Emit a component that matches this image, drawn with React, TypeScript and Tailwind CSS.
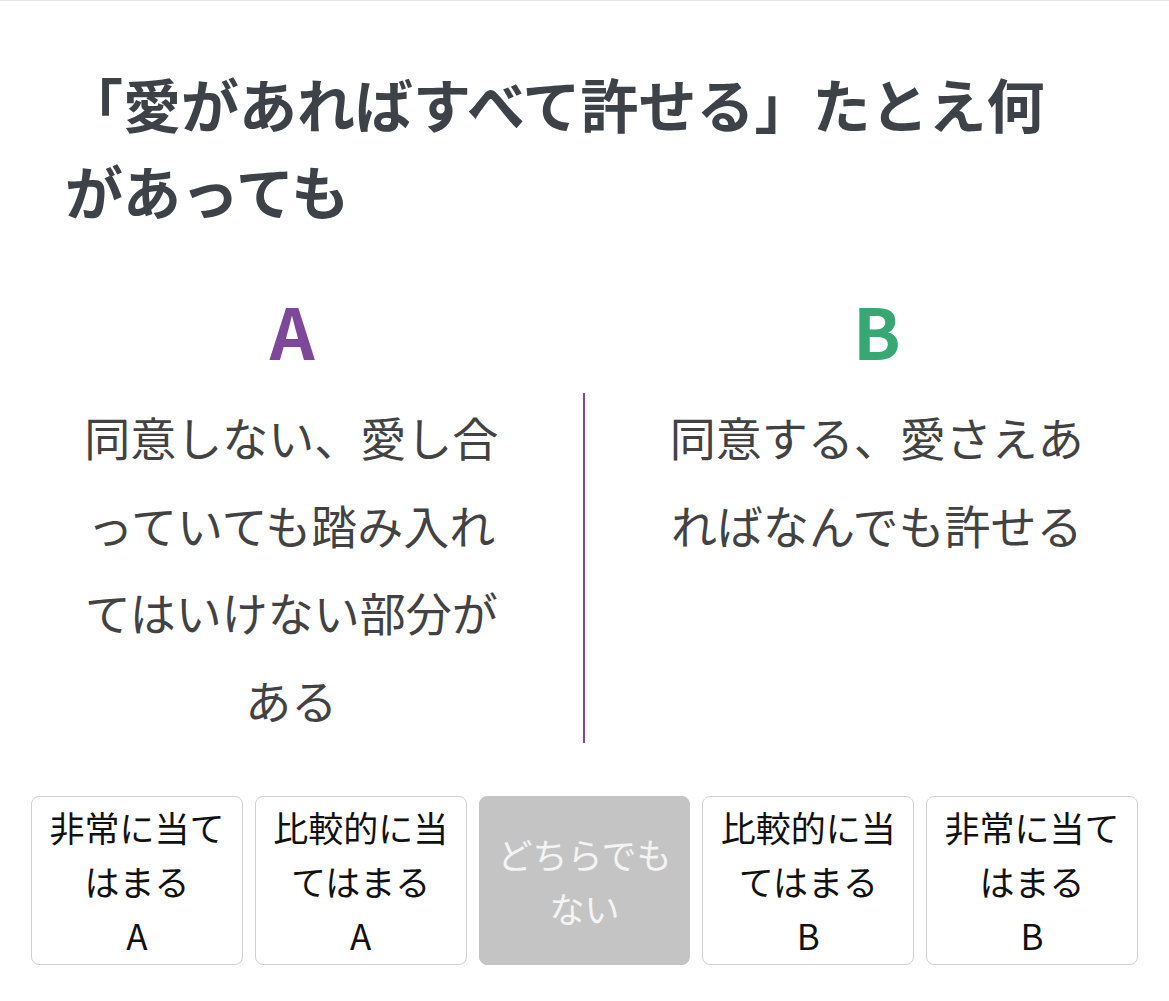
import React from 'react'

type Choice = { label: string; side?: 'A' | 'B'; neutral?: boolean }

const choices: Choice[] = [
  { label: '非常に当てはまる', side: 'A' },
  { label: '比較的に当てはまる', side: 'A' },
  { label: 'どちらでもない', neutral: true },
  { label: '比較的に当てはまる', side: 'B' },
  { label: '非常に当てはまる', side: 'B' },
]

function ChoiceButton({ choice }: { choice: Choice }) {
  if (choice.neutral) {
    return (
      <button className="flex-1 h-[169px] rounded-lg border border-[#c4c4c4] bg-[#c4c4c4] px-4 flex items-center justify-center text-center text-[35px] leading-[54px] text-[#f4f4f4]">
        <span>{choice.label}</span>
      </button>
    )
  }
  return (
    <button className="flex-1 h-[169px] rounded-lg border border-[#d0d0d0] bg-white px-4 flex items-center justify-center text-center text-[35px] leading-[54px] text-[#111111]">
      <span>
        {choice.label}
        <br />
        {choice.side}
      </span>
    </button>
  )
}

export default function App() {
  return (
    <div className="min-h-screen bg-white border-t border-[#e8e8e8] font-['Noto_Sans_CJK_JP',sans-serif]">
      <h1 className="pt-[59px] pl-[65px] pr-[94px] text-[58px] leading-[87px] font-bold text-[#3d4248]">
        「愛があればすべて許せる」たとえ何があっても
      </h1>

      {/* A / B headings */}
      <div className="grid grid-cols-2 mt-[54px]">
        <div className="text-center text-[70px] leading-[84px] font-bold text-[#7d4899]">A</div>
        <div className="text-center text-[70px] leading-[84px] font-bold text-[#37a774]">B</div>
      </div>

      {/* statements, split by the divider */}
      <div className="grid grid-cols-2 mt-[21px]">
        <p className="border-r-2 border-[#7c4b93] px-[77px] text-center text-[46px] leading-[87.5px] text-[#424242]">
          同意しない、愛し合っていても踏み入れてはいけない部分がある
        </p>
        <p className="px-[77px] text-center text-[46px] leading-[87.5px] text-[#424242]">
          同意する、愛さえあればなんでも許せる
        </p>
      </div>

      <div className="flex gap-3 px-[31px] mt-[53px]">
        {choices.map((c, i) => (
          <ChoiceButton key={i} choice={c} />
        ))}
      </div>
    </div>
  )
}
